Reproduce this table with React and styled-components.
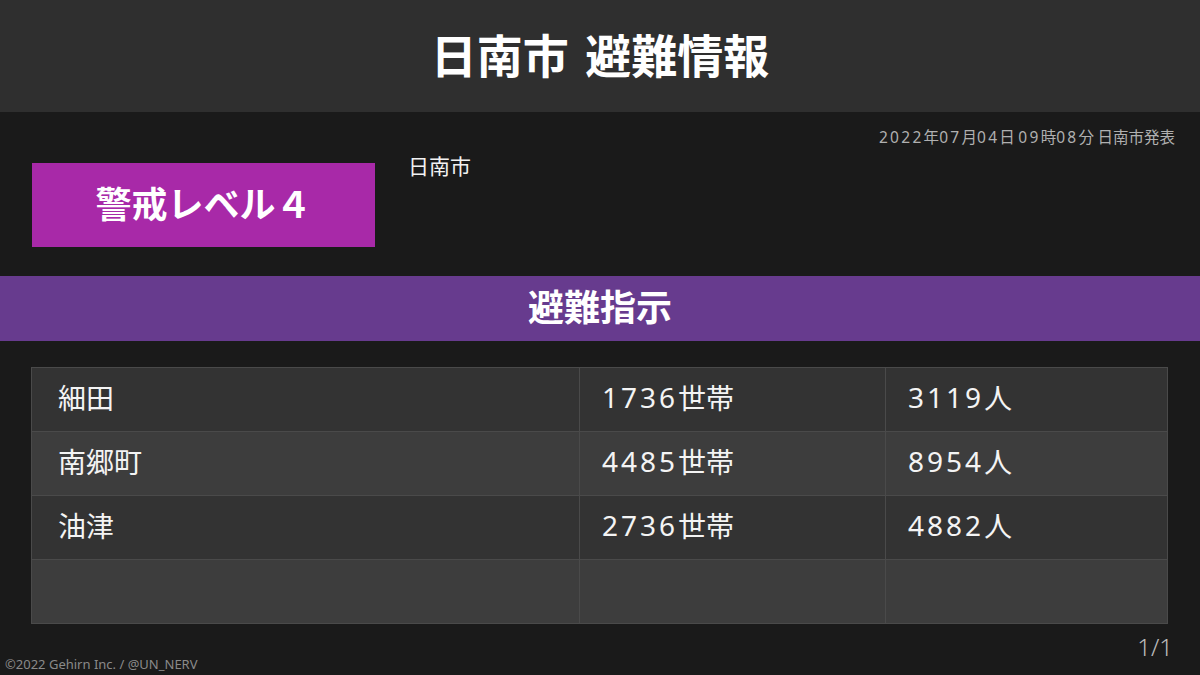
import React from 'react';
import styled, { createGlobalStyle } from 'styled-components';

const GlobalStyle = createGlobalStyle`
  html, body {
    margin: 0;
    padding: 0;
    background: #1a1a1a;
  }
  body {
    font-family: "Noto Sans CJK JP", "Noto Sans", sans-serif;
    color: #fff;
  }
`;

const Page = styled.div`
  width: 1200px;
  height: 675px;
  display: flex;
  flex-direction: column;
  background: #1a1a1a;
  overflow: hidden;
`;

const Header = styled.header`
  height: 112px;
  box-sizing: border-box;
  padding-bottom: 6px;
  flex-shrink: 0;
  background: #2f2f2f;
  display: flex;
  align-items: center;
  justify-content: center;
`;

const Title = styled.h1`
  margin: 0;
  font-size: 46px;
  font-weight: 700;
  line-height: 1;
  word-spacing: 6px;
`;

const Issued = styled.div`
  padding: 14px 25px 0 0;
  text-align: right;
  font-size: 15.5px;
  line-height: 20px;
  color: #b0b0b0;
`;

// digits in the reference run wider than the CJK font's own
const Num = styled.span`
  font-family: "Noto Sans", sans-serif;
  letter-spacing: ${(p) => p.$spacing || '0px'};
`;

const AlertRow = styled.div`
  margin-top: 16px;
  padding-left: 32px;
  display: flex;
  gap: 33px;
`;

const LevelBox = styled.div`
  width: 343px;
  height: 84px;
  box-sizing: border-box;
  padding-bottom: 7px;
  background: ${(p) => p.color};
  display: flex;
  align-items: center;
  justify-content: center;
  font-size: 36px;
  font-weight: 700;
`;

const Area = styled.div`
  margin-top: -10px;
  font-size: 21px;
  line-height: 24px;
  color: #f2f2f2;
`;

const Band = styled.div`
  margin-top: 29px;
  height: 65px;
  flex-shrink: 0;
  box-sizing: border-box;
  padding-bottom: 7px;
  background: #673b8e;
  display: flex;
  align-items: center;
  justify-content: center;
  font-size: 36px;
  font-weight: 700;
`;

const Table = styled.div`
  margin: 26px 32px 0 31px;
  border: 1px solid #4a4a4a;
  display: grid;
  grid-template-columns: 547px 306px 1fr;
`;

const Cell = styled.div`
  height: 58px;
  padding: 0 0 5px ${(p) => (p.first ? '26px' : '22px')};
  display: flex;
  align-items: center;
  background: ${(p) => (p.alt ? '#3d3d3d' : '#333333')};
  border-top: ${(p) => (p.top ? 'none' : '1px solid #4a4a4a')};
  border-left: ${(p) => (p.first ? 'none' : '1px solid #4a4a4a')};
  font-size: 28px;
  color: #f4f4f4;
  white-space: pre;
`;

const Pager = styled.div`
  margin: 10px 27px 0 0;
  text-align: right;
  font-family: "Noto Sans", sans-serif;
  font-weight: 300;
  font-size: 24px;
  line-height: 26px;
  color: #bbb;
`;

const Footer = styled.div`
  margin-top: -3px;
  padding-left: 5px;
  font-family: "Noto Sans", sans-serif;
  font-size: 13px;
  line-height: 15px;
  color: #8a8a8a;
`;

const withDigits = (text, spacing) =>
  text.split(/(\d+)/).map((part, i) =>
    /^\d+$/.test(part) ? (
      <Num key={i} $spacing={spacing}>{part}</Num>
    ) : (
      part
    )
  );

const rows = [
  ['細田', '1736世帯', '3119人'],
  ['南郷町', '4485世帯', '8954人'],
  ['油津', '2736世帯', '4882人'],
  ['', '', ''],
];

export default function App() {
  return (
    <>
      <GlobalStyle />
      <Page>
        <Header>
          <Title>日南市 避難情報</Title>
        </Header>
        <Issued>{withDigits('2022年07月04日 09時08分 日南市発表', '2.3px')}</Issued>
        <AlertRow>
          <LevelBox color="#a829a8">警戒レベル４</LevelBox>
          <Area>日南市</Area>
        </AlertRow>
        <Band>避難指示</Band>
        <Table>
          {rows.map((row, i) =>
            row.map((text, j) => (
              <Cell key={`${i}-${j}`} first={j === 0} top={i === 0} alt={i % 2 === 1}>
                {withDigits(text, '3px')}
              </Cell>
            ))
          )}
        </Table>
        <Pager>1/1</Pager>
        <Footer>©2022 Gehirn Inc. / @UN_NERV</Footer>
      </Page>
    </>
  );
}
